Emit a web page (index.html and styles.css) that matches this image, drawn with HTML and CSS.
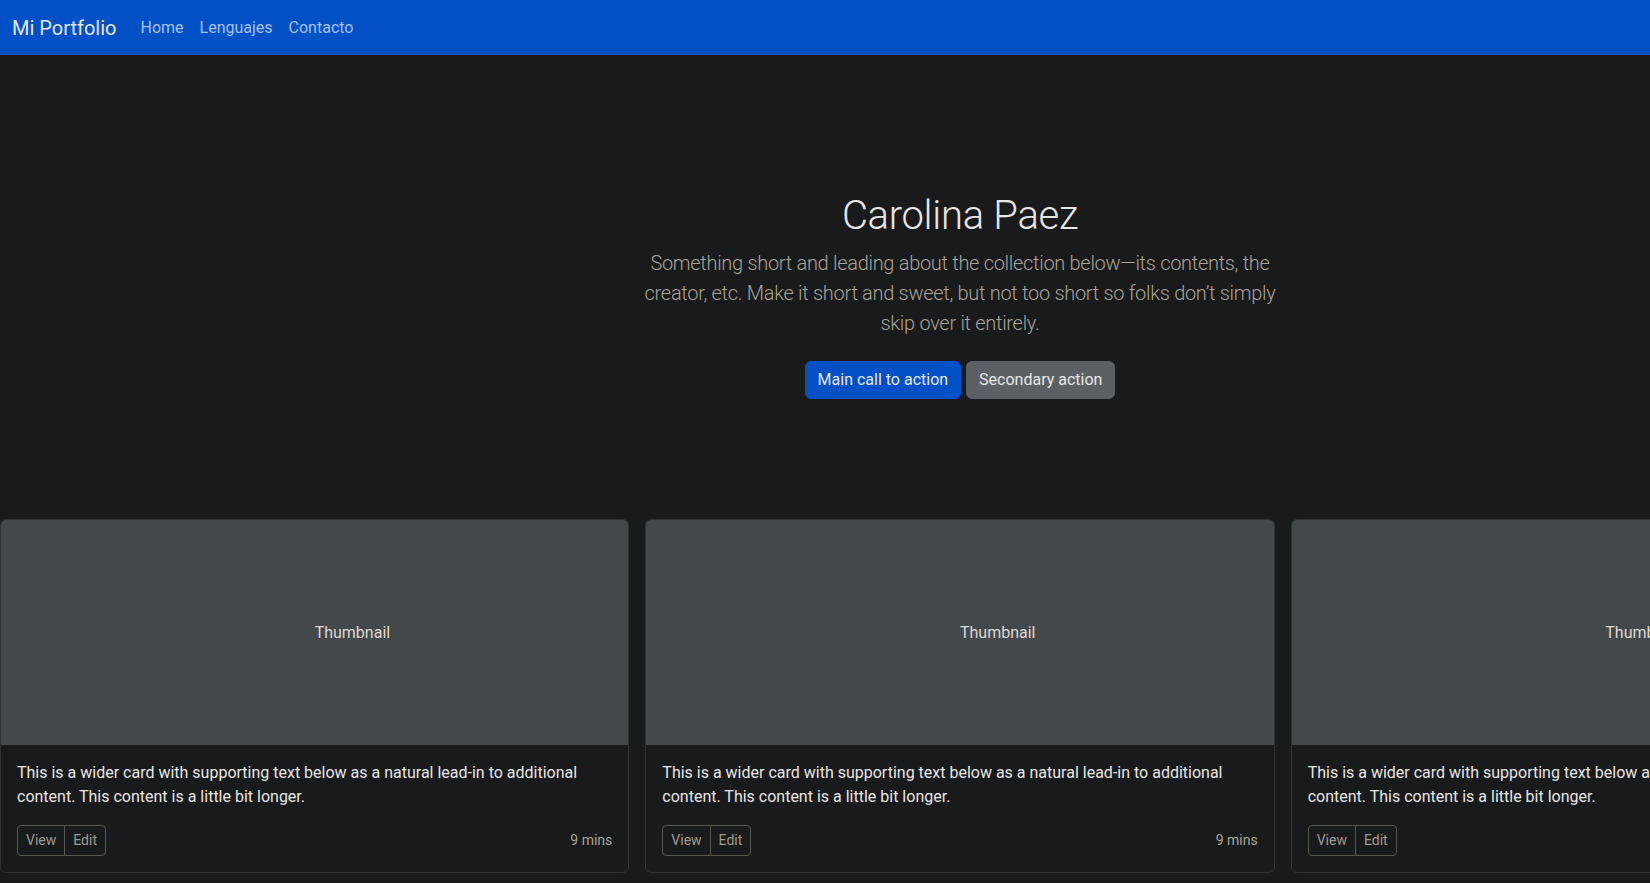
FILE: index.html
```html
<!DOCTYPE html>
<html lang="es">
<head>
<meta charset="utf-8">
<title>Mi Portfolio</title>
<link rel="stylesheet" href="styles.css">
</head>
<body>
<div class="page">
  <header class="navbar">
    <a class="brand" href="#">Mi Portfolio</a>
    <nav class="nav">
      <a class="nav-link" href="#">Home</a>
      <a class="nav-link" href="#">Lenguajes</a>
      <a class="nav-link" href="#">Contacto</a>
    </nav>
  </header>

  <main>
    <section class="hero">
      <div class="hero-inner">
        <h1 class="hero-title">Carolina Paez</h1>
        <p class="lead">Something short and leading about the collection below—its contents, the creator, etc. Make it short and sweet, but not too short so folks don’t simply skip over it entirely.</p>
        <p class="actions">
          <a class="btn btn-primary" href="#">Main call to action</a>
          <a class="btn btn-secondary" href="#">Secondary action</a>
        </p>
      </div>
    </section>

    <section class="album">
      <div class="card">
        <div class="thumb"><span class="thumb-label">Thumbnail</span></div>
        <div class="card-body">
          <p class="card-text">This is a wider card with supporting text below as a natural lead-in to additional content. This content is a little bit longer.</p>
          <div class="card-foot">
            <div class="btn-group">
              <button class="btn-sm" type="button">View</button>
              <button class="btn-sm" type="button">Edit</button>
            </div>
            <small class="mins">9 mins</small>
          </div>
        </div>
      </div>
      <div class="card">
        <div class="thumb"><span class="thumb-label">Thumbnail</span></div>
        <div class="card-body">
          <p class="card-text">This is a wider card with supporting text below as a natural lead-in to additional content. This content is a little bit longer.</p>
          <div class="card-foot">
            <div class="btn-group">
              <button class="btn-sm" type="button">View</button>
              <button class="btn-sm" type="button">Edit</button>
            </div>
            <small class="mins">9 mins</small>
          </div>
        </div>
      </div>
      <div class="card">
        <div class="thumb"><span class="thumb-label">Thumbnail</span></div>
        <div class="card-body">
          <p class="card-text">This is a wider card with supporting text below as a natural lead-in to additional content. This content is a little bit longer.</p>
          <div class="card-foot">
            <div class="btn-group">
              <button class="btn-sm" type="button">View</button>
              <button class="btn-sm" type="button">Edit</button>
            </div>
            <small class="mins">9 mins</small>
          </div>
        </div>
      </div>
    </section>
  </main>
</div>
</body>
</html>
```

FILE: styles.css
```css
* { box-sizing: border-box; }

html, body {
  margin: 0;
  padding: 0;
  background: #181a1b;
  overflow: hidden;
}

body {
  font-family: Roboto, "Liberation Sans", sans-serif;
  font-size: 16px;
  line-height: 1.5;
  color: #e8e6e3;
}

.page {
  width: 1920px;
}

/* Navbar */
.navbar {
  height: 55px;
  background: #0250c5;
  display: flex;
  align-items: center;
  padding: 0 12px;
}

.brand {
  font-size: 20px;
  line-height: 30px;
  color: #e8e6e3;
  text-decoration: none;
  margin-right: 16px;
}

.nav {
  display: flex;
}

.nav-link {
  padding: 8px;
  color: #a8c0e9;
  text-decoration: none;
  font-size: 16px;
}

/* Hero */
.hero {
  padding: 137px 0 120px;
  text-align: center;
}

.hero-inner {
  width: 664px;
  margin: 0 auto;
  padding: 0 12px;
}

.hero-title {
  margin: 0 0 8px;
  font-size: 40px;
  line-height: 48px;
  font-weight: 300;
  letter-spacing: -0.3px;
  color: #e8e6e3;
}

.lead {
  margin: 0 0 23px;
  font-size: 20px;
  line-height: 30px;
  font-weight: 300;
  letter-spacing: -0.3px;
  color: #aaa398;
}

.actions {
  margin: 0;
  display: flex;
  justify-content: center;
  gap: 5px;
}

.btn {
  display: inline-block;
  padding: 6px 12px;
  font-size: 16px;
  line-height: 24px;
  border-radius: 6px;
  border: 1px solid transparent;
  color: #e8e6e3;
  text-decoration: none;
}

.btn-primary {
  background: #0250c5;
  border-color: #0250c5;
}

.btn-secondary {
  background: #5a6064;
  border-color: #5a6064;
}

/* Album */
.album {
  display: grid;
  grid-template-columns: repeat(3, 1fr);
  gap: 16px;
}

.card {
  border: 1px solid #303335;
  border-radius: 6px;
  overflow: hidden;
  background: #181a1b;
}

.thumb {
  height: 225px;
  background: #43484b;
  position: relative;
}

.thumb-label {
  position: absolute;
  left: 50%;
  top: 117px;
  transform: translateY(-78%);
  color: #dcd9d5;
  font-size: 16px;
  line-height: 1;
  white-space: nowrap;
}

.card-body {
  padding: 16px;
}

.card-text {
  margin: 0 0 16px;
  color: #e8e6e3;
}

.card-foot {
  display: flex;
  justify-content: space-between;
  align-items: center;
}

.btn-group {
  display: flex;
}

.btn-sm {
  font-family: inherit;
  font-size: 14px;
  line-height: 21px;
  padding: 4px 8px;
  background: transparent;
  color: #a09a90;
  border: 1px solid #5a554d;
  margin: 0;
}

.btn-sm:first-child {
  border-radius: 4px 0 0 4px;
}

.btn-sm:last-child {
  border-radius: 0 4px 4px 0;
  margin-left: -1px;
}

.mins {
  font-size: 14px;
  color: #aba499;
}
```
